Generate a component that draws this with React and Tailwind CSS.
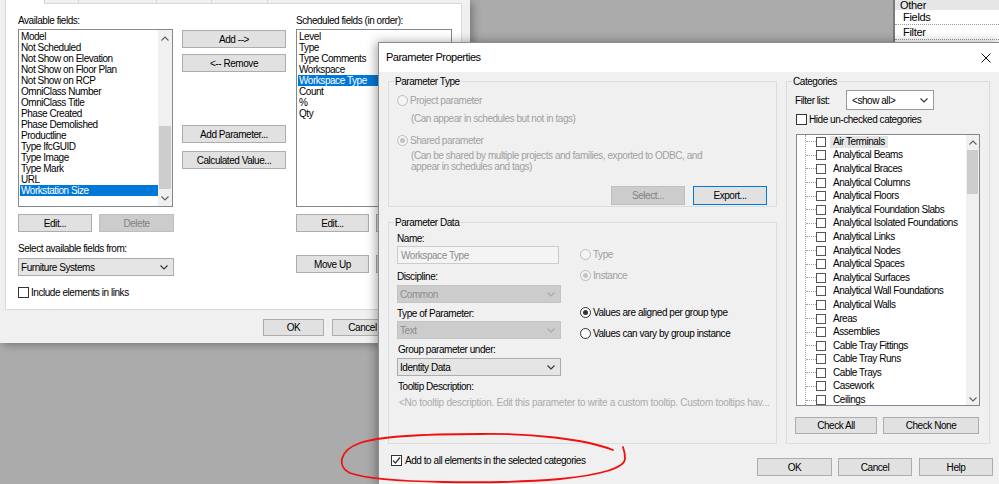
import clsx from 'clsx'

const AVAILABLE = [
  'Model', 'Not Scheduled', 'Not Show on Elevation', 'Not Show on Floor Plan', 'Not Show on RCP',
  'OmniClass Number', 'OmniClass Title', 'Phase Created', 'Phase Demolished', 'Productline',
  'Type IfcGUID', 'Type Image', 'Type Mark', 'URL', 'Workstation Size',
]

const SCHEDULED = ['Level', 'Type', 'Type Comments', 'Workspace', 'Workspace Type', 'Count', '%', 'Qty']

const CATEGORIES = [
  'Air Terminals', 'Analytical Beams', 'Analytical Braces', 'Analytical Columns', 'Analytical Floors',
  'Analytical Foundation Slabs', 'Analytical Isolated Foundations', 'Analytical Links', 'Analytical Nodes',
  'Analytical Spaces', 'Analytical Surfaces', 'Analytical Wall Foundations', 'Analytical Walls', 'Areas',
  'Assemblies', 'Cable Tray Fittings', 'Cable Tray Runs', 'Cable Trays', 'Casework', 'Ceilings',
]

function Button({ children, disabled, focused, className }) {
  return (
    <button
      type="button"
      className={clsx(
        'flex items-center justify-center border shrink-0',
        disabled && 'bg-[#cccccc] border-[#bfbfbf] text-[#838383]',
        !disabled && focused && 'bg-[#e1e1e1] border-[#0078d7]',
        !disabled && !focused && 'bg-[#e1e1e1] border-[#adadad]',
        className
      )}
    >
      {children}
    </button>
  )
}

function Chevron({ up, className }) {
  return (
    <svg width="8" height="5" viewBox="0 0 8 5" className={className}>
      <polyline
        points={up ? '0.5,4.5 4,1 7.5,4.5' : '0.5,0.5 4,4 7.5,0.5'}
        fill="none"
        stroke="currentColor"
        strokeWidth="1.1"
      />
    </svg>
  )
}

function Checkbox({ checked, className }) {
  return (
    <span className={clsx('flex items-center justify-center w-[11px] h-[11px] border border-[#333] bg-white shrink-0', className)}>
      {checked && (
        <svg width="9" height="9" viewBox="0 0 9 9">
          <path d="M1 4.5 L3.5 7 L8 1.5" fill="none" stroke="#333" strokeWidth="1.2" />
        </svg>
      )}
    </span>
  )
}

function Radio({ checked, disabled, label }) {
  return (
    <div className={clsx('flex items-center gap-[2px] h-[11px]', disabled && 'text-[#a0a0a0]')}>
      <span
        className={clsx(
          'flex items-center justify-center w-[11px] h-[11px] rounded-full border shrink-0',
          disabled ? 'border-[#bcbcbc] bg-[#f4f4f4]' : 'border-[#333] bg-white'
        )}
      >
        {checked && <span className={clsx('w-[5px] h-[5px] rounded-full', disabled ? 'bg-[#c2c2c2]' : 'bg-[#333]')} />}
      </span>
      <span>{label}</span>
    </div>
  )
}

function Select({ value, disabled, className }) {
  return (
    <div
      className={clsx(
        'flex items-center justify-between border pl-[2px] pr-[5px] h-[18px]',
        disabled ? 'bg-[#cccccc] border-[#c4c4c4] text-[#8c8c8c]' : 'bg-[#e5e5e5] border-[#acacac]',
        className
      )}
    >
      <span>{value}</span>
      <Chevron className={disabled ? 'text-[#a8a8a8]' : 'text-[#333]'} />
    </div>
  )
}

function FieldList({ items, selected, scroll, className }) {
  return (
    <div className={clsx('flex border border-[#828790] bg-white overflow-hidden', className)}>
      <div className="flex-1 min-w-0 pt-[1px] pl-[1px]">
        {items.map((f, i) => (
          <div key={f} className={clsx('h-[11px] pl-[1px] whitespace-nowrap', i === selected && 'bg-[#0078d7] text-white')}>
            {f}
          </div>
        ))}
      </div>
      {scroll && (
        <div className="w-[14px] flex flex-col bg-[#f0f0f0] text-[#606060]">
          <div className="h-[16px] flex items-center justify-center"><Chevron up /></div>
          <div className="mt-[80px] mx-[1px] h-[63px] bg-[#cdcdcd]" />
          <div className="flex-1" />
          <div className="h-[16px] flex items-center justify-center"><Chevron /></div>
        </div>
      )}
    </div>
  )
}

function ScheduleDialog() {
  return (
    <div className="absolute left-0 top-0 w-[470px] h-[343px] bg-[#f0f0f0] shadow-[3px_2px_8px_rgba(0,0,0,0.3)] flex flex-col pl-[5px] pr-[8px]">
      {/* tab strip, only the bottom edge shows */}
      <div className="flex h-[4px] shrink-0">
        <div className="w-[39px] bg-white border-l border-[#d9d9d9]" />
        <div className="w-[34px] border-l border-b border-[#d9d9d9]" />
        <div className="w-[78px] border-l border-b border-[#d9d9d9]" />
        <div className="w-[55px] border-l border-b border-[#d9d9d9]" />
        <div className="w-[57px] border-l border-r border-b border-[#d9d9d9]" />
        <div className="flex-1 border-b border-[#d9d9d9]" />
      </div>

      <div className="h-[306px] shrink-0 bg-white border border-t-0 border-[#d9d9d9] flex pl-[12px] pt-[10.5px]">
        <div className="w-[157px] flex flex-col items-start">
          <div className="h-[11px]">Available fields:</div>
          <FieldList items={AVAILABLE} selected={14} scroll className="mt-[3.5px] w-[155px] h-[178px]" />
          <div className="flex gap-[7px] mt-[7px]">
            <Button className="w-[74px] h-[18px]">Edit...</Button>
            <Button disabled className="w-[75px] h-[18px]">Delete</Button>
          </div>
          <div className="h-[11px] mt-[10.5px]">Select available fields from:</div>
          <Select value="Furniture Systems" className="mt-[4.5px] w-[156px]" />
          <div className="flex items-center gap-[2px] mt-[11px]">
            <Checkbox />
            <span>Include elements in links</span>
          </div>
        </div>

        <div className="w-[104px] ml-[7px] flex flex-col">
          <Button className="mt-[15.5px] h-[18px]">Add --&gt;</Button>
          <Button className="mt-[6px] h-[18px]">&lt;-- Remove</Button>
          <Button className="mt-[53px] h-[18px]">Add Parameter...</Button>
          <Button className="mt-[8px] h-[18px]">Calculated Value...</Button>
        </div>

        <div className="w-[156px] ml-[10px] flex flex-col items-start">
          <div className="h-[11px]">Scheduled fields (in order):</div>
          <FieldList items={SCHEDULED} selected={4} className="mt-[3.5px] w-[156px] h-[178px]" />
          {/* second button of each pair sits under the other window */}
          <div className="flex gap-[7px] mt-[7px]">
            <Button className="w-[73px] h-[18px]">Edit...</Button>
            <Button className="w-[75px] h-[18px]" />
          </div>
          <div className="flex gap-[7px] mt-[23px]">
            <Button className="w-[73px] h-[18px]">Move Up</Button>
            <Button className="w-[75px] h-[18px]" />
          </div>
        </div>
      </div>

      <div className="flex justify-end gap-[8px] mt-[9px]">
        <Button className="w-[61px] h-[17px]">OK</Button>
        <Button className="w-[61px] h-[17px]">Cancel</Button>
        <Button className="w-[61px] h-[17px]" />
      </div>
    </div>
  )
}

function PropertiesPalette() {
  return (
    <div className="absolute left-[893px] top-0 w-[106px] h-[42px] bg-white border-l-2 border-[#7a7a7a] flex flex-col text-[11px] tracking-[-0.3px]">
      <div className="h-[10px] leading-[10px] bg-[#e6e6e6] pl-[5px] overflow-hidden">Other</div>
      <div className="h-[15px] flex items-center pl-[8px] border-b border-dotted border-[#9a9a9a]">Fields</div>
      <div className="h-[15px] flex items-center pl-[8px] border-b border-dotted border-[#9a9a9a]">Filter</div>
    </div>
  )
}

function GroupBox({ title, className, children }) {
  return (
    <fieldset className={clsx('border border-[#dcdcdc] min-w-0', className)}>
      <legend className="ml-[5px] px-[1px] h-[11px] leading-[11px]">{title}</legend>
      {children}
    </fieldset>
  )
}

function ParameterType() {
  return (
    <GroupBox title="Parameter Type" className="h-[131px]">
      <div className="pl-[8px] flex flex-col">
        <div className="mt-[7.5px]"><Radio disabled label="Project parameter" /></div>
        <div className="mt-[7px] pl-[14px] h-[11px] text-[#a0a0a0]">(Can appear in schedules but not in tags)</div>
        <div className="mt-[11px]"><Radio disabled checked label="Shared parameter" /></div>
        <div className="mt-[4px] pl-[14px] text-[#a0a0a0]">
          <div className="h-[11px]">(Can be shared by multiple projects and families, exported to ODBC, and</div>
          <div className="h-[11px]">appear in schedules and tags)</div>
        </div>
        <div className="flex justify-end gap-[8px] pr-[9px] mt-[14.5px]">
          <Button disabled className="w-[74px] h-[19px]">Select...</Button>
          <Button focused className="w-[74px] h-[19px]">Export...</Button>
        </div>
      </div>
    </GroupBox>
  )
}

function ParameterData() {
  return (
    <GroupBox title="Parameter Data" className="h-[227px] mt-[10px]">
      <div className="pl-[8px] flex flex-col">
        <div className="flex">
          <div className="w-[165px] flex flex-col items-start">
            <div className="mt-[4.5px] h-[11px]">Name:</div>
            <div className="mt-[2.5px] w-[162px] h-[18px] flex items-center pl-[3px] border border-[#cccccc] bg-[#f4f4f4] text-[#8c8c8c]">
              Workspace Type
            </div>
            <div className="mt-[6.5px] h-[11px]">Discipline:</div>
            <Select disabled value="Common" className="mt-[3.5px] w-[164px]" />
            <div className="mt-[4.5px] h-[11px]">Type of Parameter:</div>
            <Select disabled value="Text" className="mt-[2.5px] w-[164px]" />
            <div className="mt-[4.5px] h-[11px] pl-[1px]">Group parameter under:</div>
            <Select value="Identity Data" className="mt-[3.5px] w-[164px]" />
            <div className="mt-[4.5px] h-[11px] pl-[1px]">Tooltip Description:</div>
          </div>
          <div className="ml-[18px] flex flex-col">
            <div className="mt-[20.5px]"><Radio disabled label="Type" /></div>
            <div className="mt-[10px]"><Radio disabled checked label="Instance" /></div>
            <div className="mt-[26px]"><Radio checked label="Values are aligned per group type" /></div>
            <div className="mt-[10px]"><Radio label="Values can vary by group instance" /></div>
          </div>
        </div>
        <div className="mt-[5px] h-[11px] pl-[2px] text-[#ababab] whitespace-nowrap tracking-[-0.29px]">
          &lt;No tooltip description. Edit this parameter to write a custom tooltip. Custom tooltips hav...
        </div>
      </div>
    </GroupBox>
  )
}

function Categories() {
  return (
    <GroupBox title="Categories" className="w-[204px] h-[368px]">
      <div className="pl-[8px] pr-[9px] flex flex-col">
        <div className="flex items-center mt-[3px]">
          <span className="w-[51px]">Filter list:</span>
          <div className="w-[88px] h-[20px] flex items-center justify-between pl-[5px] pr-[5px] bg-white border border-[#9a9a9a]">
            <span>&lt;show all&gt;</span>
            <Chevron className="text-[#333]" />
          </div>
        </div>
        <div className="flex items-center gap-[2px] mt-[4px] ml-[1px]">
          <Checkbox />
          <span>Hide un-checked categories</span>
        </div>
        <div className="mt-[9px] ml-[1px] h-[272px] flex border border-[#828790] bg-white overflow-hidden">
          <div className="flex-1 min-w-0 pl-[8px]">
            <div className="border-l border-dotted border-[#a0a0a0]">
              {CATEGORIES.map((c, i) => (
                <div key={c} className="h-[13.6px] flex items-center">
                  <span className="w-[10px] border-t border-dotted border-[#a0a0a0]" />
                  <span className="w-[10px] h-[10px] border border-[#555] bg-white shrink-0" />
                  <span className={clsx('ml-[4px] px-[3px] h-[12px] leading-[12px] whitespace-nowrap', i === 0 && 'bg-[#e5e5e5]')}>
                    {c}
                  </span>
                </div>
              ))}
            </div>
          </div>
          <div className="w-[13px] flex flex-col bg-[#f0f0f0] text-[#606060]">
            <div className="h-[15px] flex items-center justify-center"><Chevron up /></div>
            <div className="mx-[1px] h-[44px] bg-[#cdcdcd]" />
            <div className="flex-1" />
            <div className="h-[12px] flex items-center justify-center"><Chevron /></div>
          </div>
        </div>
        <div className="flex gap-[6px] mt-[11px]">
          <Button className="w-[82px] h-[17px]">Check All</Button>
          <Button className="w-[96px] h-[17px]">Check None</Button>
        </div>
      </div>
    </GroupBox>
  )
}

function ParameterDialog() {
  return (
    <div className="absolute left-[378px] top-[42px] w-[622px] h-[442px] flex flex-col border-l border-t border-[#8c8c8c] shadow-[-2px_0_10px_rgba(0,0,0,0.35)]">
      <div className="h-[29px] shrink-0 bg-white flex items-center justify-between pl-[7px] pr-[9px]">
        <span className="text-[11px] tracking-[-0.5px]">Parameter Properties</span>
        <svg width="10" height="10" viewBox="0 0 10 10">
          <path d="M0.5 0.5 L9.5 9.5 M9.5 0.5 L0.5 9.5" stroke="#111" strokeWidth="1" />
        </svg>
      </div>
      <div className="flex-1 bg-[#f0f0f0] pl-[9px] flex flex-col">
        <div className="flex gap-[9px] pt-[4px]">
          <div className="w-[389px] flex flex-col">
            <ParameterType />
            <ParameterData />
          </div>
          <Categories />
        </div>
        <div className="flex items-start">
          <div className="flex items-center gap-[3px] ml-[3px] mt-[11px]">
            <Checkbox checked />
            <span>Add to all elements in the selected categories</span>
          </div>
          <div className="ml-auto mr-[7px] mt-[14px] flex">
            <Button className="w-[75px] h-[18px]">OK</Button>
            <Button className="w-[74px] h-[18px] ml-[6px]">Cancel</Button>
            <Button className="w-[74px] h-[18px] ml-[7px]">Help</Button>
          </div>
        </div>
      </div>
    </div>
  )
}

export default function App() {
  return (
    <div className="relative w-[999px] h-[484px] overflow-hidden bg-[#ababab] font-['Liberation_Sans',Arial,sans-serif] text-[10px] leading-[11px] tracking-[-0.45px] text-black">
      <ScheduleDialog />
      <PropertiesPalette />
      <ParameterDialog />
      {/* hand-drawn red loop around the checkbox */}
      <svg className="absolute inset-0 pointer-events-none" width="999" height="484" viewBox="0 0 999 484">
        <path
          d="M613 450 C585 439 530 433 480 434 C430 434 380 436 360 443 C340 450 336 466 350 473 C380 484 500 484 560 479 C600 475 626 468 625 458 C625 453 624 450 623 447"
          fill="none"
          stroke="#f01010"
          strokeWidth="1.8"
          strokeLinecap="round"
        />
      </svg>
    </div>
  )
}
